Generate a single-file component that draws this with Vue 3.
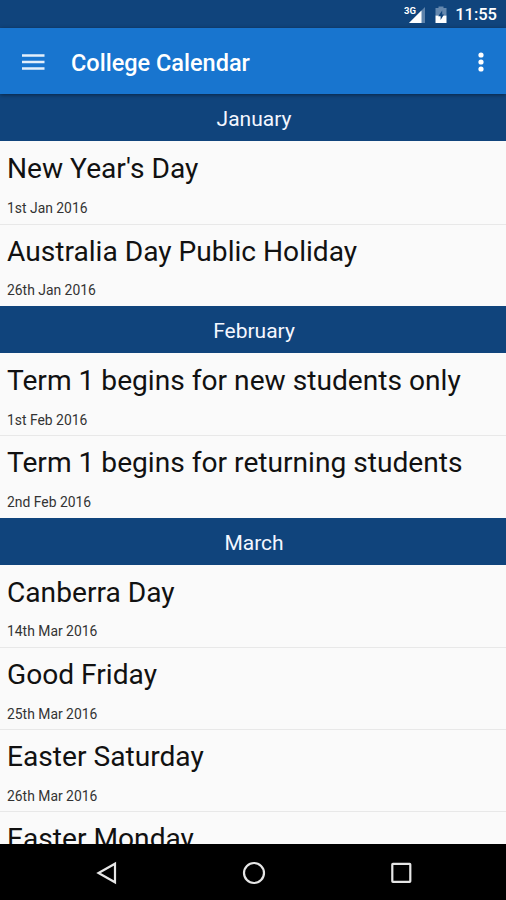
<template>
    <div class="screen">
        <div class="status-bar">
            <svg class="signal" width="22" height="20" viewBox="0 0 22 20">
                <path d="M21 1V17H5Z" fill="#5d82aa" />
                <path d="M17.5 4.5V17H5Z" fill="#fff" />
                <text x="0" y="8" class="network">3G</text>
            </svg>
            <svg class="battery" width="12" height="18" viewBox="0 0 12 18">
                <path d="M3.5 2V0.5h5V2H11.5V9.5H0.5V2Z" fill="#6588ae" />
                <path d="M0.5 9.5H11.5V17H0.5Z" fill="#fff" />
                <path d="M7.2 4.5L3.2 10.2H5.6V14L9 8.6H7.2Z" fill="#10447c" />
            </svg>
            <span class="clock">11:55</span>
        </div>
        <header class="toolbar">
            <svg class="menu" width="24" height="18" viewBox="0 0 24 18">
                <path d="M1 2.5H23.5M1 9H23.5M1 15.5H23.5" stroke="#e3effb" stroke-width="2.7" />
            </svg>
            <h1>College Calendar</h1>
            <svg class="more" width="6" height="22" viewBox="0 0 6 22">
                <circle cx="3" cy="4" r="2.6" />
                <circle cx="3" cy="11" r="2.6" />
                <circle cx="3" cy="18" r="2.6" />
            </svg>
        </header>
        <main class="calendar">
            <section v-for="month in months" :key="month.name">
                <h2>{{ month.name }}</h2>
                <div v-for="event in month.events" :key="event.title" class="event">
                    <div class="event-title">{{ event.title }}</div>
                    <div class="event-date">{{ event.date }}</div>
                </div>
            </section>
        </main>
        <nav class="nav-bar">
            <svg width="24" height="24" viewBox="0 0 24 24">
                <path d="M21 2.7V21.3L4.5 12Z" />
            </svg>
            <svg width="24" height="24" viewBox="0 0 24 24">
                <circle cx="12" cy="12" r="10" />
            </svg>
            <svg width="24" height="24" viewBox="0 0 24 24">
                <rect x="3.3" y="2.8" width="18" height="18" rx="0.6" />
            </svg>
        </nav>
    </div>
</template>

<script setup>
const months = [
    {
        name: 'January',
        events: [
            { title: "New Year's Day", date: '1st Jan 2016' },
            { title: 'Australia Day Public Holiday', date: '26th Jan 2016' }
        ]
    },
    {
        name: 'February',
        events: [
            { title: 'Term 1 begins for new students only', date: '1st Feb 2016' },
            { title: 'Term 1 begins for returning students', date: '2nd Feb 2016' }
        ]
    },
    {
        name: 'March',
        events: [
            { title: 'Canberra Day', date: '14th Mar 2016' },
            { title: 'Good Friday', date: '25th Mar 2016' },
            { title: 'Easter Saturday', date: '26th Mar 2016' },
            { title: 'Easter Monday', date: '28th Mar 2016' }
        ]
    }
]
</script>

<style>
body {
    margin: 0;
    background: #000;
}
</style>

<style scoped>
.screen {
    display: flex;
    flex-direction: column;
    height: 900px;
    overflow: hidden;
    background: #fafafa;
    font-family: Roboto, "Liberation Sans", sans-serif;
}

.status-bar {
    display: flex;
    align-items: center;
    justify-content: flex-end;
    flex: none;
    box-sizing: border-box;
    height: 28px;
    padding-right: 9px;
    background: #10447c;
    color: #fff;
}

.signal {
    margin: 4px 9px 0 0;
}

.network {
    font-size: 9.5px;
    font-weight: 700;
    fill: #fff;
}

.battery {
    margin: 2px 8px 0 0;
}

.clock {
    margin-top: 2px;
    font-size: 16.5px;
    font-weight: 500;
    line-height: 20px;
}

.toolbar {
    display: flex;
    align-items: center;
    flex: none;
    box-sizing: border-box;
    position: relative;
    z-index: 1;
    height: 66px;
    padding: 1px 22px 0 21px;
    background: #1875cf;
    box-shadow: 0 1px 4px rgba(0, 0, 0, 0.45);
}

h1 {
    margin: 2px auto 0 26px;
    color: #fff;
    font-size: 23.5px;
    font-weight: 500;
    line-height: 30px;
}

.more {
    fill: #fff;
}

.calendar {
    flex: 1;
    min-height: 0;
    overflow: hidden;
}

h2 {
    box-sizing: border-box;
    height: 47.4px;
    margin: 0;
    padding: 2px 0 0 2px;
    background: #10447c;
    color: #f4f7ff;
    font-size: 21px;
    font-weight: 400;
    line-height: 47px;
    text-align: center;
}

.event {
    box-sizing: border-box;
    height: 82.2px;
    padding: 10px 7px 0;
}

.event + .event {
    border-top: 1px solid #e8e8e8;
    padding-top: 9px;
}

.event-title {
    color: #111;
    font-size: 28.15px;
    line-height: 35px;
    white-space: nowrap;
}

.event-date {
    margin-top: 12.5px;
    color: #333;
    font-size: 13.9px;
    line-height: 18px;
}

.nav-bar {
    display: flex;
    align-items: center;
    justify-content: space-between;
    flex: none;
    box-sizing: border-box;
    height: 56px;
    padding: 1px 93px 0 94px;
    background: #000;
}

.nav-bar svg {
    fill: none;
    stroke: #e6e6e6;
    stroke-width: 2.2;
}
</style>
